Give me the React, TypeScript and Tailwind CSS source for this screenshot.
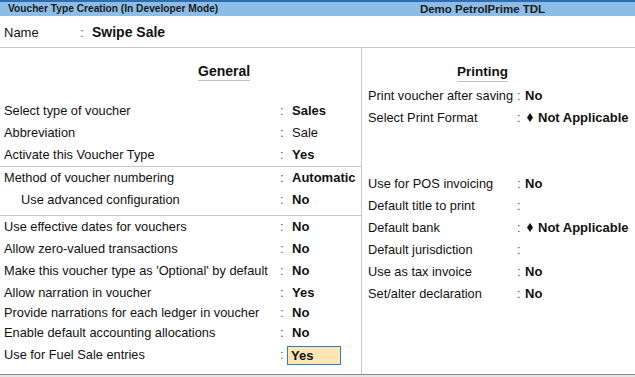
import React from 'react';

type Row = { label: string; value?: string; bold?: boolean; diamond?: boolean; indent?: boolean; h?: string; active?: boolean };

const groupOne: Row[] = [
  { label: 'Select type of voucher', value: 'Sales', bold: true },
  { label: 'Abbreviation', value: 'Sale' },
  { label: 'Activate this Voucher Type', value: 'Yes', bold: true },
];

const groupTwo: Row[] = [
  { label: 'Method of voucher numbering', value: 'Automatic', bold: true },
  { label: 'Use advanced configuration', value: 'No', bold: true, indent: true },
];

const groupThree: Row[] = [
  { label: 'Use effective dates for vouchers', value: 'No', bold: true },
  { label: 'Allow zero-valued transactions', value: 'No', bold: true },
  { label: "Make this voucher type as 'Optional' by default", value: 'No', bold: true },
  { label: 'Allow narration in voucher', value: 'Yes', bold: true },
  { label: 'Provide narrations for each ledger in voucher', value: 'No', bold: true, h: 'h-[18px] leading-[18px]' },
  { label: 'Enable default accounting allocations', value: 'No', bold: true },
  { label: 'Use for Fuel Sale entries', value: 'Yes', bold: true, active: true },
];

const printingTop: Row[] = [
  { label: 'Print voucher after saving', value: 'No', bold: true },
  { label: 'Select Print Format', value: 'Not Applicable', bold: true, diamond: true },
];

const printingBottom: Row[] = [
  { label: 'Use for POS invoicing', value: 'No', bold: true },
  { label: 'Default title to print' },
  { label: 'Default bank', value: 'Not Applicable', bold: true, diamond: true },
  { label: 'Default jurisdiction' },
  { label: 'Use as tax invoice', value: 'No', bold: true },
  { label: 'Set/alter declaration', value: 'No', bold: true },
];

function Diamond() {
  return (
    <svg width="6" height="9" viewBox="0 0 6 9" className="inline-block ml-[2px] mr-[5px] mb-[2px]">
      <path d="M3 0 L6 4.5 L3 9 L0 4.5 Z" fill="#111" />
    </svg>
  );
}

function LeftRow({ row }: { row: Row }) {
  return (
    <div className={`flex ${row.h ?? 'h-[22px] leading-[22px]'}`}>
      <div className={`w-[280px] whitespace-nowrap ${row.indent ? 'pl-[21px]' : 'pl-[4px]'}`}>{row.label}</div>
      <div className="w-[12px] text-[#555]">:</div>
      {row.active ? (
        <div className="flex items-center">
          <div className="ml-[-5px] w-[54px] h-[19px] leading-[17px] border border-[#2b7fc9] bg-[#fde6b3] pl-[3px] font-bold text-[13px]">
            {row.value}
          </div>
        </div>
      ) : (
        <div className={`whitespace-nowrap text-[13px] ${row.bold ? 'font-bold' : ''}`}>{row.value}</div>
      )}
    </div>
  );
}

function RightRow({ row }: { row: Row }) {
  return (
    <div className="flex h-[22px] leading-[22px]">
      <div className="w-[155px] pl-[6px] whitespace-nowrap">{row.label}</div>
      <div className="w-[8px] text-[#555]">:</div>
      <div className={`whitespace-nowrap ${row.bold ? 'font-bold text-[13px]' : ''}`}>
        {row.diamond && <Diamond />}
        {row.value}
      </div>
    </div>
  );
}

export default function App() {
  return (
    <div className="w-[635px] h-[377px] bg-white text-[#111] font-['Liberation_Sans',Arial,sans-serif] text-[12.8px] flex flex-col overflow-hidden">
      <div className="h-[2px] bg-[#2e6db4]" />
      <div className="h-[14px] bg-[#8bbde6] flex items-center font-bold leading-[14px] text-[#1a1a1a]">
        <div className="w-[330px] pl-[8px] whitespace-nowrap text-[10.2px]">Voucher Type Creation (In Developer Mode)</div>
        <div className="flex-1 text-center whitespace-nowrap text-[11.5px]">Demo PetrolPrime TDL</div>
      </div>

      <div className="h-[32px] flex items-baseline leading-[32px] border-b border-[#c8c8c8]">
        <span className="w-[80px] pl-[4px] text-[13px]">Name</span>
        <span className="w-[12px] text-[13px] text-[#555]">:</span>
        <span className="text-[14px] font-bold">Swipe Sale</span>
      </div>

      <div className="flex flex-1 min-h-0">
        <div className="w-[362px] border-r border-[#c8c8c8] flex flex-col">
          <div className="h-[52px] pt-[14px] pl-[198px]">
            <span className="inline-block h-[19px] leading-[18px] text-[14px] font-bold border-b border-[#c0c0c0]">General</span>
          </div>
          <div className="border-b border-[#c8c8c8]">
            {groupOne.map((r) => (
              <LeftRow key={r.label} row={r} />
            ))}
          </div>
          <div className="pb-[4px] border-b border-[#c8c8c8]">
            {groupTwo.map((r) => (
              <LeftRow key={r.label} row={r} />
            ))}
          </div>
          <div>
            {groupThree.map((r) => (
              <LeftRow key={r.label} row={r} />
            ))}
          </div>
        </div>

        <div className="flex-1 flex flex-col">
          <div className="pt-[14px] pl-[95px]">
            <span className="inline-block h-[19px] leading-[18px] text-[13.5px] font-bold border-b border-[#c0c0c0]">Printing</span>
          </div>
          <div className="mt-[3px]">
            {printingTop.map((r) => (
              <RightRow key={r.label} row={r} />
            ))}
          </div>
          <div className="mt-[44px]">
            {printingBottom.map((r) => (
              <RightRow key={r.label} row={r} />
            ))}
          </div>
        </div>
      </div>

      <div className="h-[3px] border-t border-[#8a8a8a] bg-[#e6e6e6]" />
    </div>
  );
}
